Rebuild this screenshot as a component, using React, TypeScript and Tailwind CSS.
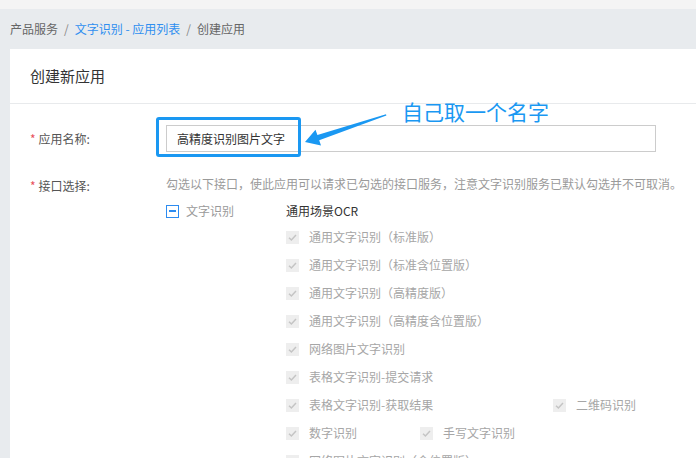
import React from "react";

const font = { fontFamily: '"Noto Sans CJK SC", "Noto Sans", sans-serif' };

const DisabledBox: React.FC = () => (
  <span className="flex h-[13px] w-[13px] shrink-0 items-center justify-center bg-[#eeeeee]">
    <svg viewBox="0 0 12 12" className="h-[11px] w-[11px]">
      <path d="M2.2 6.2 L4.8 8.7 L9.8 3.3" fill="none" stroke="#c4c4c4" strokeWidth="1.6" />
    </svg>
  </span>
);

interface ApiItemProps {
  label: string;
  className?: string;
}

const ApiItem: React.FC<ApiItemProps> = ({ label, className = "" }) => (
  <div className={`flex h-[28px] items-center gap-[10px] ${className}`}>
    <DisabledBox />
    <span className="whitespace-nowrap text-[12px] text-[#a6a6a6]">{label}</span>
  </div>
);

const FormLabel: React.FC<{ text: string }> = ({ text }) => (
  <div className="flex w-[136px] shrink-0 items-center text-[12px] leading-[20px] text-[#555]">
    <span className="mr-[3px] text-[#e8505b]">*</span>
    {text}
  </div>
);

export default function App() {
  return (
    <div className="relative flex h-[458px] w-full flex-col overflow-hidden bg-[#e8ebee]" style={font}>
      <div className="h-[9px] shrink-0 bg-[#f4f4f4]" />

      <div className="flex h-[40px] shrink-0 items-center gap-[6px] pl-[10px] text-[12px] text-[#666]">
        <span>产品服务</span>
        <span className="text-[#888]">/</span>
        <span className="text-[#2f8ff0]">文字识别 - 应用列表</span>
        <span className="text-[#888]">/</span>
        <span>创建应用</span>
      </div>

      <div className="ml-[10px] flex-1 bg-white">
        <div className="flex h-[55px] items-center border-b border-[#e8eaec] px-[20px] text-[15px] text-[#333]">
          创建新应用
        </div>

        <div className="pl-[20px] pt-[21px]">
          <div className="flex items-center">
            <FormLabel text="应用名称:" />
            <div className="flex h-[27px] w-[490px] items-center border border-[#cccccc] pl-[10px] text-[12px] text-[#333]">
              高精度识别图片文字
            </div>
          </div>

          <div className="mt-[24px] flex items-start">
            <FormLabel text="接口选择:" />
            <div className="flex flex-col">
              <div className="text-[12px] leading-[16px] text-[#9a9a9a]">
                勾选以下接口，使此应用可以请求已勾选的接口服务，注意文字识别服务已默认勾选并不可取消。
              </div>
              <div className="mt-[7px] flex">
                <div className="flex h-[24px] w-[120px] shrink-0 items-center gap-[7px]">
                  <span className="flex h-[13px] w-[13px] items-center justify-center border border-[#2d8cf0] bg-white">
                    <span className="h-[2px] w-[7px] bg-[#2d8cf0]" />
                  </span>
                  <span className="text-[12px] text-[#9a9a9a]">文字识别</span>
                </div>
                <div className="flex flex-col">
                  <div className="flex h-[24px] items-center text-[12px] text-[#333]">通用场景OCR</div>
                  <div className="grid grid-cols-[134px_133px_140px]">
                    <ApiItem className="col-span-3" label="通用文字识别（标准版）" />
                    <ApiItem className="col-span-3" label="通用文字识别（标准含位置版）" />
                    <ApiItem className="col-span-3" label="通用文字识别（高精度版）" />
                    <ApiItem className="col-span-3" label="通用文字识别（高精度含位置版）" />
                    <ApiItem className="col-span-3" label="网络图片文字识别" />
                    <ApiItem className="col-span-3" label="表格文字识别-提交请求" />
                    <ApiItem className="col-span-2" label="表格文字识别-获取结果" />
                    <ApiItem label="二维码识别" />
                    <ApiItem label="数字识别" />
                    <ApiItem className="col-span-2" label="手写文字识别" />
                    <ApiItem className="col-span-3" label="网络图片文字识别（含位置版）" />
                  </div>
                </div>
              </div>
            </div>
          </div>
        </div>
      </div>

      {/* annotation overlay */}
      <div className="absolute left-[156px] top-[117px] h-[40px] w-[145px] rounded-[3px] border-[3px] border-[#1a98f2]" />
      <svg className="absolute left-0 top-0" width="696" height="458" viewBox="0 0 696 458">
        <polygon
          points="305,142 315.5,129.8 317.4,135 386,114.3 386.4,115.6 319.2,140.3 321,145.4"
          fill="#1a98f2"
        />
      </svg>
      <div className="absolute left-[402px] top-[97px] whitespace-nowrap text-[21px] leading-[28px] text-[#1a98f2]">
        自己取一个名字
      </div>
    </div>
  );
}
